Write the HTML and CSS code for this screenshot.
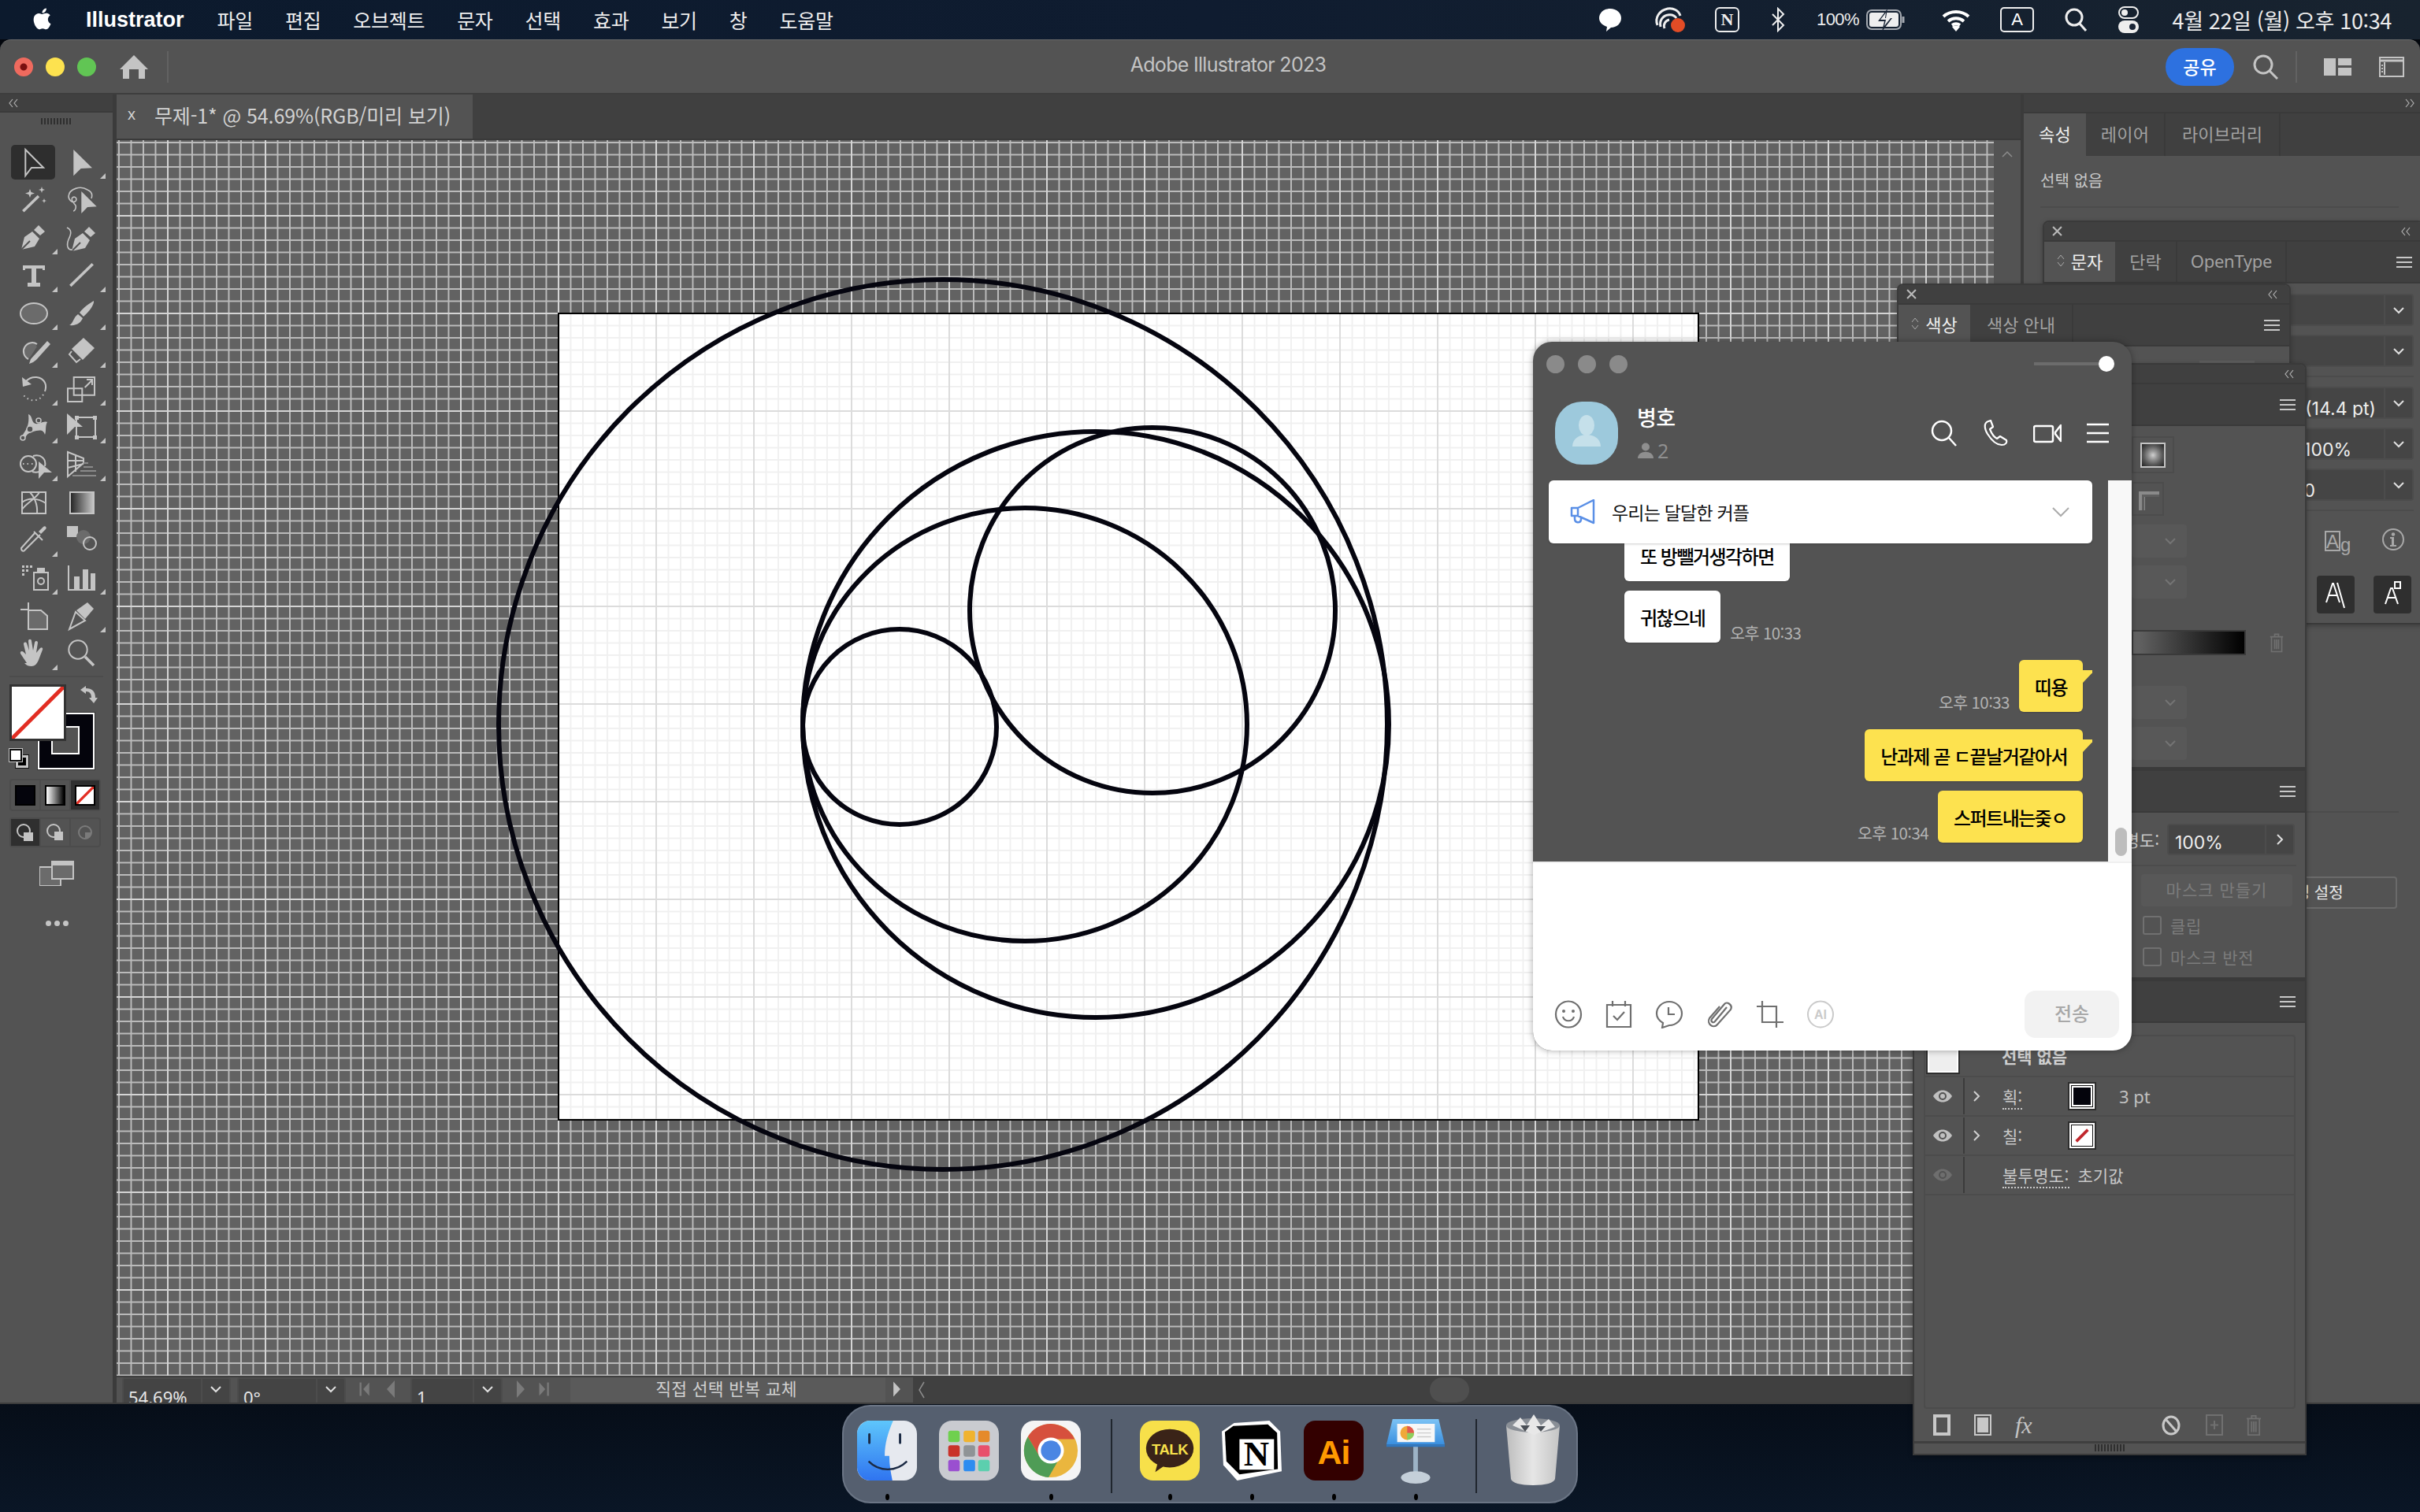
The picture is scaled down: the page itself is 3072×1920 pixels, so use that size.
FILE: index.html
```html
<!DOCTYPE html>
<html lang="ko">
<head>
<meta charset="utf-8">
<title>Adobe Illustrator 2023</title>
<link rel="stylesheet" href="styles.css">
</head>
<body>
<svg class="defs" width="0" height="0">
  <defs>
    <symbol id="chev" viewBox="0 0 16 10"><path d="M2 2l6 6 6-6" fill="none" stroke="currentColor" stroke-width="2"/></symbol>
    <symbol id="chevr" viewBox="0 0 10 16"><path d="M2 2l6 6-6 6" fill="none" stroke="currentColor" stroke-width="2"/></symbol>
    <symbol id="burger" viewBox="0 0 20 16"><path d="M0 2h20M0 8h20M0 14h20" stroke="currentColor" stroke-width="2"/></symbol>
    <symbol id="collapse" viewBox="0 0 14 12"><path d="M6 1L2 6l4 5M12 1L8 6l4 5" fill="none" stroke="currentColor" stroke-width="1.2"/></symbol>
    <symbol id="expand" viewBox="0 0 14 12"><path d="M2 1l4 5-4 5M8 1l4 5-4 5" fill="none" stroke="currentColor" stroke-width="1.2"/></symbol>
    <symbol id="closex" viewBox="0 0 12 12"><path d="M1 1l10 10M11 1L1 11" stroke="currentColor" stroke-width="2"/></symbol>
    <symbol id="updown" viewBox="0 0 10 18"><path d="M1 7l4-5 4 5M1 11l4 5 4-5" fill="none" stroke="currentColor" stroke-width="1"/></symbol>
    <symbol id="eye" viewBox="0 0 26 18"><path d="M1 9c6-10 18-10 24 0-6 10-18 10-24 0z" fill="currentColor"/><circle cx="13" cy="9" r="5" fill="#535353"/><circle cx="13" cy="9" r="3" fill="currentColor"/></symbol>
    <symbol id="trash" viewBox="0 0 22 30"><path d="M1 6h20M8 5V2h6v3M3 6v23h16V6M8 10v15M11 10v15M14 10v15" fill="none" stroke="currentColor" stroke-width="2"/></symbol>
    <linearGradient id="tg" x1="0" x2="1"><stop offset="0" stop-color="#222"/><stop offset="1" stop-color="#c8c8c8"/></linearGradient>
    <linearGradient id="fblue" x1="0" x2="0" y1="0" y2="1"><stop offset="0" stop-color="#5ec6fb"/><stop offset="1" stop-color="#2f74f0"/></linearGradient>
    <linearGradient id="key" x1="0" x2="0" y1="0" y2="1"><stop offset="0" stop-color="#7cc3f5"/><stop offset="1" stop-color="#3a8fdf"/></linearGradient>
    <linearGradient id="trashg" x1="0" x2="1"><stop offset="0" stop-color="#bdbdbd"/><stop offset=".5" stop-color="#e6e6e6"/><stop offset="1" stop-color="#c4c4c4"/></linearGradient>
  </defs>
</svg>

<header class="menubar">
  <div class="mb-left">
    <svg class="apple" viewBox="0 0 24 24"><path d="M17.05 12.536c-.03-2.9 2.37-4.3 2.48-4.37-1.35-1.98-3.45-2.25-4.2-2.28-1.79-.18-3.49 1.05-4.4 1.05-.91 0-2.31-1.03-3.8-1-1.95.03-3.76 1.14-4.76 2.88-2.03 3.52-.52 8.74 1.46 11.6.97 1.4 2.12 2.97 3.63 2.92 1.46-.06 2.01-.94 3.77-.94 1.76 0 2.26.94 3.8.91 1.57-.03 2.56-1.43 3.52-2.84 1.11-1.63 1.57-3.2 1.6-3.28-.04-.02-3.06-1.17-3.1-4.65zM14.15 4c.8-.97 1.34-2.32 1.19-3.66-1.15.05-2.55.77-3.38 1.74-.74.86-1.39 2.23-1.21 3.55 1.28.1 2.59-.65 3.4-1.63z"/></svg>
    <b class="appname">Illustrator</b>
    <span>파일</span><span>편집</span><span>오브젝트</span><span>문자</span><span>선택</span><span>효과</span><span>보기</span><span>창</span><span>도움말</span>
  </div>
  <div class="mb-right">
    <svg class="st-bubble" viewBox="0 0 30 32"><path d="M15 2c8 0 14 5 14 12s-6 12-13 12l-6 5 1-6C5 23 1 19 1 14 1 7 7 2 15 2z" fill="#fff"/></svg>
    <svg class="st-cc" viewBox="0 0 40 34"><path d="M5 24C1 14 8 5 18 3c7-1 14 2 16 9" fill="none" stroke="#eee" stroke-width="3"/><path d="M9 26c-2-8 3-14 9-15 5-1 9 1 11 4M14 28c-2-5 1-10 6-11" fill="none" stroke="#eee" stroke-width="3"/><circle cx="31" cy="24" r="9" fill="#e34c26"/></svg>
    <div class="st-n">N</div>
    <svg class="st-bt" viewBox="0 0 18 32"><path d="M2 9l14 14-7 7V2l7 7L2 23" fill="none" stroke="#eee" stroke-width="2"/></svg>
    <span class="st-pct">100%</span>
    <svg class="st-batt" viewBox="0 0 50 30"><rect x="1" y="3" width="43" height="24" rx="6" fill="none" stroke="#a4a9b0" stroke-width="2"/><rect x="4" y="6" width="37" height="18" rx="3" fill="#eee"/><path d="M47 11v8" stroke="#a4a9b0" stroke-width="3"/><path d="M27 1L15 17h8l-3 13 13-17h-8z" fill="#1a2536"/><path d="M25 6l-7 9h7l-2 8 8-10h-7z" fill="#eee"/></svg>
    <svg class="st-wifi" viewBox="0 0 36 30"><path d="M2 11c9-8 23-8 32 0M8 17c6-5 14-5 20 0M13 22c3-2 7-2 10 0" fill="none" stroke="#fff" stroke-width="4"/><path d="M18 30l-5-6c3-2 7-2 10 0z" fill="#fff"/></svg>
    <div class="st-a">A</div>
    <svg class="st-search" viewBox="0 0 30 32"><circle cx="13" cy="13" r="10" fill="none" stroke="#eee" stroke-width="3"/><path d="M20 21l8 9" stroke="#eee" stroke-width="3"/></svg>
    <svg class="st-ctrl" viewBox="0 0 28 34"><rect x="2" y="1" width="24" height="14" rx="7" fill="none" stroke="#eee" stroke-width="2"/><circle cx="9" cy="8" r="4" fill="#eee"/><rect x="1" y="18" width="26" height="16" rx="8" fill="#eee"/><circle cx="19" cy="26" r="4" fill="#1a2536"/></svg>
    <span class="st-date">4월 22일 (월) 오후 10:34</span>
  </div>
</header>

<main class="app">
  <div class="titlebar">
    <div class="tl-left">
      <i class="light red"></i><i class="light yellow"></i><i class="light green"></i>
      <svg class="home" viewBox="0 0 36 30"><path d="M18 0L36 18h-4v12H24V18H12v12H4V18H0z" fill="#c4c4c4"/></svg>
      <i class="vline"></i>
    </div>
    <div class="apptitle">Adobe Illustrator 2023</div>
    <div class="tl-right">
      <div class="share">공유</div>
      <svg class="tsearch" viewBox="0 0 32 32"><circle cx="13" cy="13" r="11" fill="none" stroke="#c4c4c4" stroke-width="3"/><path d="M21 21l10 10" stroke="#c4c4c4" stroke-width="3"/></svg>
      <i class="vline"></i>
      <svg class="tws" viewBox="0 0 35 22"><path d="M0 0h15v22H0zM18 0h17v9H18zM18 12h17v10H18z" fill="#c4c4c4"/></svg>
      <svg class="tpanel" viewBox="0 0 32 26"><rect x="1" y="1" width="30" height="24" fill="none" stroke="#c4c4c4" stroke-width="2"/><path d="M1 5h30" stroke="#c4c4c4" stroke-width="3"/><path d="M7 7v16" stroke="#c4c4c4" stroke-width="2"/><path d="M4 10v10" stroke="#c4c4c4" stroke-width="2" stroke-dasharray="2 2"/></svg>
    </div>
  </div>

  <div class="workspace">
    <aside class="toolbar">
      <div class="collapse-row"><svg class="mini"><use href="#collapse"/></svg></div>
      <div class="grip"></div>
      <div class="tools">
        <div class="tool sel"><svg viewBox="0 0 40 40"><path class="o" d="M10.3 4v33L18 27l15-.3z"/></svg></div>
        <div class="tool more"><svg viewBox="0 0 40 40"><path class="f" d="M9.3 4v33.3l9.4-9.3 14.3-.7z"/></svg></div>
        <div class="tool"><svg viewBox="0 0 40 40"><path class="o w3" d="M6.3 34.3L26 15"/><path class="f" d="M15 6l1.5 4 4.5 1.500-4.500 1.500L15 17l-1.500-4L9 11.500l4.500-1.500zM30 3l1 3 3 1-3 1-1 3-1-3-3-1 3-1zM33 18l.8 2.200 2.200.800-2.200.8L33 24l-.8-2.200-2.200-.8 2.200-.8z"/></svg></div>
        <div class="tool"><svg viewBox="0 0 40 40"><path class="o t" d="M27 7C18 1 4 6 3 15c0 5 5 9 8 7 4-2 1-8-3-5-3 3 2 7 4 10 1 3-1 7-3 7M27 7c5 2 7 5 5 11"/><path class="f" d="M19.300 9v28l7.700-8 11.700-.7z"/></svg></div>
        <div class="tool more"><svg viewBox="0 0 40 40"><path class="f" d="M4 35L8 19l10-7 9 9-6 10zM20 10l6-6 8 8-6 5z"/><path class="dk" d="M4 35l11-11"/></svg></div>
        <div class="tool"><svg viewBox="0 0 40 40"><path class="f" d="M7 37l4-16 10-7 9 9-6 10zM23 12l6-6 8 8-6 5z"/><path class="dk" d="M7 37l11-11"/><path class="o t" d="M1 7c7 3 5 9 2 15-3 8-1 14 5 13"/></svg></div>
        <div class="tool more"><svg viewBox="0 0 40 40"><path class="f" d="M6 7h28v6h-3v-2H23v18h5v5H12v-5h5V11H9v2H6z"/></svg></div>
        <div class="tool more"><svg viewBox="0 0 40 40"><path class="o w3" d="M5.300 33L33.700 5.300"/></svg></div>
        <div class="tool more"><svg viewBox="0 0 40 40"><ellipse class="o fg" cx="20" cy="20" rx="17" ry="13"/></svg></div>
        <div class="tool more"><svg viewBox="0 0 40 40"><path class="f" d="M35 4c1 4-5 13-13 20l-5-5C22 12 30 7 35 4zM15 21l6 5c-2 5-7 10-17 9 5-2 5-10 11-14z"/></svg></div>
        <div class="tool more"><svg viewBox="0 0 40 40"><path class="o fg" d="M24 11a11 11 0 1 0-11 19"/><path class="fg2" d="M14 14a9 9 0 0 1 10 0l-9 14c-6-3-6-10-1-14z"/><path class="f" d="M37 7l4 4-18 20-4 3-5 2 2-6z"/></svg></div>
        <div class="tool more"><svg viewBox="0 0 40 40"><path class="f" d="M22 3l14 13-15 15-14-14z"/><path class="o" d="M7 20l-3 4 9 10 5-4"/></svg></div>
        <div class="tool more"><svg viewBox="0 0 40 40"><path class="o" d="M10 10c8-8 20-6 24 2 2 4 1 8 0 11"/><path class="f" d="M5 5l1 12 11-3z"/><path class="o dots" d="M32 27c-5 9-17 10-25 1"/></svg></div>
        <div class="tool more"><svg viewBox="0 0 40 40"><path class="o" d="M9.700 5H36v22.700H9.700zM2 19.300h18.300V36H2zM23.700 18l9-9M26 8h7v7"/></svg></div>
        <div class="tool more"><svg viewBox="0 0 40 40"><path class="f" d="M13 4c6 2 3 10 9 12 6 1 9-4 15-2-3 5-1 12-3 16-2-6-5-6-11-5-8 2-11 3-14 9l-4-2c3-6 10-12 8-28z"/><circle class="cut" cx="6" cy="34" r="3"/><circle class="cut" cx="26" cy="12" r="3"/><circle class="cut" cx="15" cy="23" r="4"/></svg></div>
        <div class="tool more"><svg viewBox="0 0 40 40"><path class="o dash" d="M13 8h24v25H13z"/><path class="f" d="M1 3v27l10-10h10z"/><path class="f" d="M11 6h5v5h-5zM34 6h5v5h-5zM11 31h5v5h-5zM34 31h5v5h-5z"/></svg></div>
        <div class="tool more"><svg viewBox="0 0 40 40"><circle class="o" cx="13" cy="19" r="10"/><path class="o" d="M19 9c10-3 17 4 15 13M18 29c3 1 6 1 9 0"/><path class="o dots" d="M6 19h18"/><path class="f" d="M26 16v22l7-8h10z"/></svg></div>
        <div class="tool more"><svg viewBox="0 0 40 40"><path class="o" d="M2 4l20 8v6L2 35zM12 7v22M2 15h20M2 24l20-5"/><path class="o dim" d="M22 18h6M22 23h12M18 28h20M8 34h30"/></svg></div>
        <div class="tool"><svg viewBox="0 0 40 40"><path class="o" d="M5 7h30v27H5zM5 20c8-6 20-6 30 1M5 29c5-8 18-14 22-22M15 7c5 5 10 15 9 27"/></svg></div>
        <div class="tool"><svg viewBox="0 0 40 40"><rect x="5" y="7" width="30" height="27" fill="url(#tg)" stroke="#c4c4c4" stroke-width="2"/></svg></div>
        <div class="tool more"><svg viewBox="0 0 40 40"><path class="o" d="M28 13L9 32c-2 3-5 2-5-2l18-20M20 9l11 11"/><path class="f" d="M26 9l6-6c2-2 5 1 3 3l-6 6z"/></svg></div>
        <div class="tool"><svg viewBox="0 0 40 40"><path class="f" d="M1 2h14v14H1z"/><circle class="fg" cx="22" cy="16" r="9"/><circle class="o" cx="30" cy="24" r="8"/></svg></div>
        <div class="tool more"><svg viewBox="0 0 40 40"><path class="o" d="M20 13h18v22H20z"/><circle class="o" cx="29" cy="24" r="4"/><path class="f" d="M24 7h10v6H24z"/><path class="f" d="M5 4h3v3H5zM10 4h3v3h-3zM15 4h3v3h-3zM5 9h3v3H5zM10 9h3v3h-3zM5 14h3v3H5z"/></svg></div>
        <div class="tool more"><svg viewBox="0 0 40 40"><path class="o" d="M3 4v31h34"/><path class="f" d="M10 18h7v17h-7zM21 9h7v26h-7zM31 14h6v21h-6z"/></svg></div>
        <div class="tool"><svg viewBox="0 0 40 40"><path class="o fg" d="M13 13h16l8 7v17H13z"/><path class="o" d="M3 12h10M13 3v10"/></svg></div>
        <div class="tool more"><svg viewBox="0 0 40 40"><path class="o" d="M4 37l8-22 12 11zM12 15l2 2"/><path class="f" d="M24 24L13 13 27 3l8 8z"/></svg></div>
        <div class="tool more"><svg viewBox="0 0 40 40"><path class="f" d="M11 32L3 20c-1-3 2-4 4-2l3 3-3-13c0-3 3-3 4-1l3 9-1-12c0-3 4-3 4 0l2 12 2-10c1-3 4-2 4 0l-2 13 5-6c2-2 4 0 3 2l-5 13c-2 5-5 8-9 8-4 0-6-1-9-4z"/></svg></div>
        <div class="tool"><svg viewBox="0 0 40 40"><circle class="o" cx="15" cy="15" r="11.700"/><path class="o w3" d="M24 24l11 11"/></svg></div>
      </div>
      <div class="tb-sep"></div>
      <div class="colors">
        <div class="sw-stroke"><i></i></div>
        <div class="sw-fill"><svg viewBox="0 0 66 66"><path d="M0 66L66 0" stroke="#e22d22" stroke-width="5"/></svg></div>
        <svg class="sw-swap" viewBox="0 0 24 24"><path d="M1 6l7-5v3c8 0 12 4 12 12h3l-5 7-6-7h3c0-5-2-8-7-8v3z" fill="#c4c4c4"/></svg>
        <div class="sw-default"><i class="d1"></i><i class="d2"></i></div>
      </div>
      <div class="seg modes">
        <div class="cell"><i class="m-black"></i></div>
        <div class="cell"><i class="m-grad"></i></div>
        <div class="cell on"><i class="m-none"><svg viewBox="0 0 20 20"><path d="M0 20L20 0" stroke="#e22d22" stroke-width="3"/></svg></i></div>
      </div>
      <div class="seg draws">
        <div class="cell on"><svg viewBox="0 0 24 24"><circle class="o" cx="10" cy="10" r="8"/><path class="f" d="M10 12h12v11H10z"/></svg></div>
        <div class="cell"><svg viewBox="0 0 24 24"><circle class="o" cx="10" cy="10" r="8"/><path class="f" d="M11 11h11v11H11z"/></svg></div>
        <div class="cell dimmed"><svg viewBox="0 0 24 24"><circle class="o" cx="12" cy="12" r="8"/><path class="f" d="M12 12h8a8 8 0 0 1-8 8z"/></svg></div>
      </div>
      <svg class="screen" viewBox="0 0 44 32"><path d="M0 8h27v24H0z" fill="#6b6b6b" stroke="#c4c4c4" stroke-width="2"/><path d="M16 1h27v22H16z" fill="#6b6b6b" stroke="#c4c4c4" stroke-width="2"/><path d="M16 1h27v5H16z" fill="#c4c4c4"/></svg>
      <div class="tdots"><i></i><i></i><i></i></div>
    </aside>

    <section class="center">
      <div class="tabbar">
        <div class="doctab"><span class="tabx">x</span><span>무제-1* @ 54.69%(RGB/미리 보기)</span></div>
      </div>
      <div class="canvas-row">
        <div class="canvas">
          <div class="artboard"></div>
          <svg class="shapes" viewBox="0 0 2383 1569">
            <ellipse cx="1049" cy="742" rx="564" ry="565"/>
            <ellipse cx="1243" cy="742" rx="372" ry="372"/>
            <ellipse cx="1153" cy="742" rx="282" ry="275"/>
            <ellipse cx="1315" cy="597" rx="232" ry="232"/>
            <ellipse cx="994" cy="745" rx="123" ry="124"/>
          </svg>
        </div>
        <div class="vscroll"><svg class="upc" viewBox="0 0 16 10"><path d="M2 8l6-6 6 6" fill="none" stroke="#8c8c8c" stroke-width="1.500"/></svg></div>
      </div>
      <div class="statusbar">
        <div class="sfield zoomf"><span>54.69%</span><div class="sbtn"><svg class="chev"><use href="#chev"/></svg></div></div>
        <div class="sfield rotf"><span>0°</span><div class="sbtn"><svg class="chev"><use href="#chev"/></svg></div></div>
        <div class="snav"><svg viewBox="0 0 34 30" class="nav"><path d="M2 4h3v22H2zM18 4L8 15l10 11z"/></svg><svg viewBox="0 0 16 30" class="nav n2"><path d="M12 4L2 15l10 11z"/></svg></div>
        <div class="sfield pagef"><span>1</span><div class="sbtn"><svg class="chev"><use href="#chev"/></svg></div></div>
        <div class="snav"><svg viewBox="0 0 16 30" class="nav"><path d="M2 4l10 11L2 26z"/></svg><svg viewBox="0 0 34 30" class="nav n3"><path d="M2 4l10 11L2 26zM15 4h3v22h-3z"/></svg></div>
        <div class="stext">직접 선택 반복 교체</div>
        <svg class="splay" viewBox="0 0 14 30"><path d="M1 2l12 13L1 28z" fill="#c4c4c4"/></svg>
        <div class="strack">
          <svg class="sleft" viewBox="0 0 10 24"><path d="M8 2L2 12l6 10" fill="none" stroke="#8c8c8c" stroke-width="1.500"/></svg>
          <i class="sthumb"></i>
        </div>
      </div>
    </section>

    <aside class="rightpanel">
      <div class="rp-collapse"><svg class="mini"><use href="#expand"/></svg></div>
      <div class="tabs rp-tabs">
        <div class="tab on">속성</div><div class="tab">레이어</div><div class="tab">라이브러리</div><div class="tab-fill"></div>
      </div>
      <div class="rp-none">선택 없음</div>
      <div class="rp-line"></div>
      <div class="rp-line lower"></div>
      <div class="rp-btn"><span>환경 설정</span></div>
    </aside>
  </div>
</main>

<section class="floatpanel charpanel">
  <div class="fp-title"><svg class="xmark"><use href="#closex"/></svg><svg class="mini"><use href="#collapse"/></svg></div>
  <div class="tabs fp-tabs">
    <div class="tab on"><svg class="ud"><use href="#updown"/></svg>문자</div><div class="tab">단락</div><div class="tab">OpenType</div>
    <div class="tab-fill"><svg class="burger"><use href="#burger"/></svg></div>
  </div>
  <div class="cp-body">
    <div class="field"><div class="ftxt"></div><div class="fbtn"><svg class="chev"><use href="#chev"/></svg></div></div>
    <div class="field"><div class="ftxt"></div><div class="fbtn"><svg class="chev"><use href="#chev"/></svg></div></div>
    <div class="hsep"></div>
    <div class="field"><div class="ftxt">(14.4 pt)</div><div class="fbtn"><svg class="chev"><use href="#chev"/></svg></div></div>
    <div class="field"><div class="ftxt">100%</div><div class="fbtn"><svg class="chev"><use href="#chev"/></svg></div></div>
    <div class="field"><div class="ftxt">0</div><div class="fbtn"><svg class="chev"><use href="#chev"/></svg></div></div>
    <div class="hsep"></div>
    <div class="cp-icons">
      <div class="ag"><span class="ag-a">A</span><span class="ag-g">g</span></div>
      <svg class="info" viewBox="0 0 30 30"><circle cx="15" cy="15" r="13" fill="none" stroke="#a8a8a8" stroke-width="2"/><circle cx="15" cy="8.500" r="2.200" fill="#a8a8a8"/><path d="M11 12h5v10h3v2h-8v-2h2v-8h-2z" fill="#a8a8a8"/></svg>
    </div>
    <div class="cp-btns">
      <div class="darkbtn"><svg viewBox="0 0 30 36"><path d="M3 28L11 4h1l8 24M6 19h11M17 3l9 32" fill="none" stroke="#fff" stroke-width="2"/></svg></div>
      <div class="darkbtn"><svg viewBox="0 0 30 36"><path d="M6 30l7-20h2l7 20M8 22h12" fill="none" stroke="#fff" stroke-width="2"/><path d="M18 2h7v8h-7z" fill="none" stroke="#fff" stroke-width="2"/></svg></div>
    </div>
  </div>
</section>

<section class="floatpanel colorpanel">
  <div class="fp-title"><svg class="xmark"><use href="#closex"/></svg><svg class="mini"><use href="#collapse"/></svg></div>
  <div class="tabs fp-tabs">
    <div class="tab on"><svg class="ud"><use href="#updown"/></svg>색상</div><div class="tab">색상 안내</div>
    <div class="tab-fill"><svg class="burger"><use href="#burger"/></svg></div>
  </div>
  <div class="col-body"><i></i></div>
</section>

<section class="stack">
  <div class="sp grad">
    <div class="fp-title right"><svg class="mini"><use href="#collapse"/></svg></div>
    <div class="sp-head"><svg class="burger"><use href="#burger"/></svg></div>
    <div class="g-body">
      <div class="g-thumbbox"><i></i></div>
      <div class="g-thumbbox two"><svg viewBox="0 0 28 28"><path d="M2 4h26v6H10v18H2z" fill="#8a8a8a"/><path d="M6 8h22v3H9v17H6z" fill="#5f5f5f"/></svg></div>
      <div class="g-drop"><svg class="chev"><use href="#chev"/></svg></div>
      <div class="g-drop"><svg class="chev"><use href="#chev"/></svg></div>
      <div class="g-bar"><i></i><svg class="g-trash"><use href="#trash"/></svg></div>
      <div class="g-drop"><svg class="chev"><use href="#chev"/></svg></div>
      <div class="g-drop"><svg class="chev"><use href="#chev"/></svg></div>
    </div>
  </div>
  <div class="sp trans">
    <div class="sp-head"><svg class="burger"><use href="#burger"/></svg></div>
    <div class="t-row">
      <span class="t-label">불투명도:</span>
      <div class="t-input"><span>100%</span><div class="t-btn"><svg class="chevr"><use href="#chevr"/></svg></div></div>
    </div>
    <div class="t-sep"></div>
    <div class="t-mask">마스크 만들기</div>
    <label class="t-check"><i></i>클립</label>
    <label class="t-check"><i></i>마스크 반전</label>
  </div>
  <div class="sp appear">
    <div class="sp-head"><svg class="burger"><use href="#burger"/></svg></div>
    <div class="a-list">
      <div class="a-row top"><i class="a-thumb"></i><span class="a-none">선택 없음</span></div>
      <div class="a-row"><svg class="eye"><use href="#eye"/></svg><i class="a-v"></i><svg class="a-ch"><use href="#chevr"/></svg><span class="a-lab u-wrap"><span class="u">획:</span></span><div class="a-sw"><i class="in-black"></i></div><span class="a-val">3 pt</span></div>
      <div class="a-row"><svg class="eye"><use href="#eye"/></svg><i class="a-v"></i><svg class="a-ch"><use href="#chevr"/></svg><span class="a-lab">칠:</span><div class="a-sw"><i class="in-none"><svg viewBox="0 0 24 24"><path d="M4 20L20 4" stroke="#c1272d" stroke-width="4"/></svg></i></div></div>
      <div class="a-row"><svg class="eye off"><use href="#eye"/></svg><i class="a-v"></i><span class="a-lab wide"><span class="u gap">불투명도:</span> 초기값</span></div>
    </div>
    <div class="a-foot">
      <svg class="af" viewBox="0 0 22 27"><path d="M2 2h18v23H2z" fill="none" stroke="#c8c8c8" stroke-width="4"/></svg>
      <svg class="af" viewBox="0 0 22 27"><path d="M1 1h20v25H1z" fill="none" stroke="#c8c8c8" stroke-width="2"/><path d="M4 4h14v19H4z" fill="#c8c8c8"/></svg>
      <span class="fx">fx</span>
      <svg class="af noic" viewBox="0 0 24 26"><ellipse cx="12" cy="13" rx="10" ry="11" fill="none" stroke="#c8c8c8" stroke-width="3"/><path d="M5 5l14 16" stroke="#c8c8c8" stroke-width="3"/></svg>
      <svg class="af plus" viewBox="0 0 22 27"><path d="M1 1h20v25H1zM11 8v11M6 13.500h10" fill="none" stroke="#707070" stroke-width="2"/></svg>
      <svg class="af atrash"><use href="#trash"/></svg>
    </div>
    <div class="a-grip"><i></i></div>
  </div>
</section>

<section class="chat">
  <div class="ch-top">
    <div class="ch-dots"><i></i><i></i><i></i></div>
    <div class="ch-slider"><i></i></div>
  </div>
  <div class="ch-profile">
    <div class="avatar"><svg viewBox="0 0 80 80"><ellipse cx="40" cy="30" rx="10" ry="13" fill="#c5e0ea"/><path d="M22 57c0-20 36-20 36 0z" fill="#c5e0ea"/></svg></div>
    <div class="ch-who">
      <div class="ch-name">병호</div>
      <div class="ch-count"><svg viewBox="0 0 22 20"><circle cx="11" cy="5.500" r="5" fill="#8f8f8f"/><path d="M1 20c0-11 20-11 20 0z" fill="#8f8f8f"/></svg>2</div>
    </div>
    <div class="ch-actions">
      <svg viewBox="0 0 34 34"><circle cx="14" cy="14" r="12" fill="none" stroke="#fff" stroke-width="2.500"/><path d="M23 23l9 10" stroke="#fff" stroke-width="2.500"/></svg>
      <svg viewBox="0 0 34 34"><path d="M8 2c-6 2-5 9-1 16 5 8 12 14 18 14 5 0 7-3 6-6l-8-5-4 3c-4-2-7-7-9-12l4-3-3-8z" fill="none" stroke="#fff" stroke-width="2.200" stroke-linejoin="round"/></svg>
      <svg viewBox="0 0 36 34"><rect x="1" y="8" width="24" height="20" rx="2" fill="none" stroke="#fff" stroke-width="2.500"/><path d="M35 7L28 16v2l7 9z" fill="none" stroke="#fff" stroke-width="2.500" stroke-linejoin="round"/></svg>
      <svg viewBox="0 0 30 34"><path d="M1 6h28M1 17h28M1 28h28" stroke="#fff" stroke-width="2.500"/></svg>
    </div>
  </div>
  <div class="ch-area">
    <div class="ch-msgs">
      <div class="msg left"><div class="bubble white">또 방뺄거생각하면</div></div>
      <div class="msg left"><div class="bubble white">귀찮으네</div><time>오후 10:33</time></div>
      <div class="msg right wide"><time>오후 10:33</time><div class="bubble yellow tail">띠용</div></div>
      <div class="msg right wide"><div class="bubble yellow tail">난과제 곧 ㄷ끝날거같아서</div></div>
      <div class="msg right"><time>오후 10:34</time><div class="bubble yellow">스퍼트내는줒ㅇ</div></div>
    </div>
    <div class="ch-strip"><i></i></div>
    <div class="notice">
      <svg class="mega" viewBox="0 0 32 32"><path d="M2 11h8L30 1v29L10 21H2zM10 11v10M6 21v4c0 5 7 6 8 1v-3" fill="none" stroke="#5a8fe6" stroke-width="2.500" stroke-linejoin="round"/></svg>
      <span>우리는 달달한 커플</span>
      <svg class="nchev" viewBox="0 0 24 14"><path d="M2 2l10 10L22 2" fill="none" stroke="#ababab" stroke-width="2"/></svg>
    </div>
  </div>
  <div class="ch-input">
    <div class="ci-tools">
      <svg viewBox="0 0 36 36"><ellipse cx="18" cy="18" rx="16" ry="16.500" class="ci"/><circle cx="12" cy="14" r="2" class="cf"/><circle cx="24" cy="14" r="2" class="cf"/><path d="M11 21c2 7 12 7 14 0" class="ci"/></svg>
      <svg viewBox="0 0 36 36"><path d="M3 6h30v28H3zM10 1v7M26 1v7M11 20l5 5 9-10" class="ci"/></svg>
      <svg viewBox="0 0 36 36"><path d="M18 2c9 0 16 7 16 15s-7 15-16 15l-9 3 1-6C5 26 2 22 2 17 2 9 9 2 18 2z" class="ci"/><path d="M17 9v9h8" class="ci"/></svg>
      <svg viewBox="0 0 36 36"><path d="M27 9L12 27c-2 3-6 0-4-3L24 5c3-4 11 1 8 7L15 31c-5 6-14-1-10-8L18 8" class="ci"/></svg>
      <svg viewBox="0 0 36 36"><path d="M8 1v27h27M1 8h25v27" class="ci"/></svg>
      <svg viewBox="0 0 36 36" class="ci-ai"><ellipse cx="18" cy="18" rx="16" ry="16.500" class="ca"/><text x="18" y="24" text-anchor="middle">AI</text></svg>
    </div>
    <div class="send">전송</div>
  </div>
</section>

<nav class="dock">
  <div class="d-item">
    <svg class="d-ic" viewBox="0 0 78 78"><rect width="78" height="78" rx="17" fill="#e6e9ef"/><path d="M17 0h30c-7 16-11 30-11 46h6c0 12 2 22 4 32H17C8 78 0 70 0 61V17C0 8 8 0 17 0z" fill="url(#fblue)"/><path d="M16 18v11M56 18v11" stroke="#1b2a44" stroke-width="3" stroke-linecap="round"/><path d="M15 53c14 14 36 14 50 0" fill="none" stroke="#1b2a44" stroke-width="2.500"/></svg>
    <i class="dot"></i>
  </div>
  <div class="d-item">
    <svg class="d-ic" viewBox="0 0 78 78"><rect width="78" height="78" rx="17" fill="#c9cbd0"/><rect x="12" y="13" width="15" height="15" rx="3" fill="#6fd04e"/><rect x="32" y="13" width="15" height="15" rx="3" fill="#f0b32f"/><rect x="51" y="13" width="15" height="15" rx="3" fill="#e58a2b"/><rect x="12" y="32" width="15" height="15" rx="3" fill="#c9322a"/><rect x="32" y="32" width="15" height="15" rx="3" fill="#8f9396"/><rect x="51" y="32" width="15" height="15" rx="3" fill="#e8506c"/><rect x="12" y="51" width="15" height="15" rx="3" fill="#9a4fd0"/><rect x="32" y="51" width="15" height="15" rx="3" fill="#2d8cf0"/><rect x="51" y="51" width="15" height="15" rx="3" fill="#5ccfae"/></svg>
  </div>
  <div class="d-item">
    <svg class="d-ic" viewBox="0 0 78 78"><rect width="78" height="78" rx="17" fill="#f5f5f5"/><circle cx="39" cy="39" r="35" fill="#eab63e"/><path d="M39 4a35 35 0 0 0-30 17l16 27 14-24h31A35 35 0 0 0 39 4z" fill="#d6503d"/><path d="M9 21a35 35 0 0 0 27 53l13-23-24-3z" fill="#4f9c56"/><circle cx="39" cy="39" r="17" fill="#fff"/><circle cx="39" cy="39" r="13" fill="#4a86e3"/></svg>
    <i class="dot"></i>
  </div>
  <i class="d-div"></i>
  <div class="d-item">
    <svg class="d-ic" viewBox="0 0 78 78"><rect width="78" height="78" rx="17" fill="#f7e04a"/><ellipse cx="39" cy="36" rx="31" ry="25" fill="#3a2318"/><path d="M24 52l-4 15 16-11z" fill="#3a2318"/><text x="39" y="44" class="talk" text-anchor="middle">TALK</text></svg>
    <i class="dot"></i>
  </div>
  <div class="d-item">
    <svg class="d-ic" viewBox="0 0 78 78"><path d="M16 3L62 0l14 14 2 52-58 12L2 58 0 14z" fill="#fff"/><path d="M15 7L60 5l12 11 1 47-50 7L6 53 4 15z" fill="#000"/><path d="M23 24h45v40H23z" fill="#fff"/><text x="45" y="58" class="notion" text-anchor="middle">N</text></svg>
    <i class="dot"></i>
  </div>
  <div class="d-item">
    <svg class="d-ic" viewBox="0 0 78 78"><rect width="78" height="78" rx="15" fill="#330000"/><text x="39" y="56" class="aitext" text-anchor="middle">Ai</text></svg>
    <i class="dot"></i>
  </div>
  <div class="d-item keynote">
    <svg class="d-ic" viewBox="0 0 78 86"><path d="M36 34h6v40h-6z" fill="#9db3c6"/><ellipse cx="39" cy="76" rx="19" ry="8" fill="#c4cfd9"/><path d="M9 0h60l8 33H1z" fill="url(#key)"/><path d="M1 33h76v3H1z" fill="#3077c0"/><path d="M15 6h49v24H15z" fill="#f7f7f7"/><circle cx="28" cy="18" r="9" fill="#f0a83a"/><path d="M28 9a9 9 0 0 1 9 9h-9z" fill="#e2584e"/><path d="M28 18h9a9 9 0 0 1-9 9z" fill="#8dcf5e"/><path d="M41 13h18M41 18h18M41 23h18" stroke="#ccc" stroke-width="1.500"/></svg>
    <i class="dot"></i>
  </div>
  <i class="d-div"></i>
  <div class="d-item d-trash">
    <svg class="d-ic" viewBox="0 0 72 90"><path d="M2 14l6 68c1 5 12 8 28 8s27-3 28-8l6-68z" fill="url(#trashg)"/><ellipse cx="36" cy="14" rx="34" ry="9" fill="#8a8f96"/><path d="M10 14l10-10 8 10 9-14 9 14 10-8 8 10-27 10z" fill="#e8e8e8"/><path d="M20 14l6 8 6-8zM40 15l6 7 6-7z" fill="#4a4f56"/></svg>
  </div>
</nav>
</body>
</html>
```
FILE: styles.css
```css
* { box-sizing: border-box; }
html, body { margin: 0; padding: 0; }
body {
  width: 3072px; height: 1920px; position: relative; overflow: hidden;
  background: linear-gradient(180deg, #03060c 0, #04080f 88%, #0a1626 100%);
  font-family: "Noto Sans CJK KR", "Noto Sans", sans-serif;
  color: #c4c4c4; font-size: 22px;
}
i { display: block; font-style: normal; }
svg { display: block; }
.defs { position: absolute; }

/* menu bar */
.menubar {
  height: 50px; display: flex; align-items: center; justify-content: space-between;
  background: linear-gradient(90deg, #0c1a2d, #0f1c30 50%, #18232f);
  color: #eee; padding-left: 41px; padding-right: 36px;
}
.mb-left { display: flex; align-items: center; gap: 41px; font-size: 25px; letter-spacing: -.3px; }
.apple { width: 28px; height: 34px; fill: #fff; margin-top: -3px; margin-right: -1px; }
.appname { font-family: "Liberation Sans", sans-serif; font-size: 27px; font-weight: 700; letter-spacing: 0; color: #fff; margin-right: 1px; }
.mb-right { display: flex; align-items: center; gap: 38px; }
.st-bubble { width: 30px; height: 32px; margin-right: 2px; }
.st-cc { width: 40px; height: 34px; }
.st-n { width: 31px; height: 32px; border: 2px solid #eee; border-radius: 6px; text-align: center; font: 700 22px/28px "Liberation Serif", serif; color: #eee; margin-right: 2px; }
.st-bt { width: 18px; height: 32px; margin-right: 2px; }
.st-pct { width: 58px; font-family: "Liberation Sans", sans-serif; font-size: 22px; letter-spacing: -.6px; margin-right: -33px; white-space: nowrap; }
.st-batt { width: 50px; height: 30px; }
.st-wifi { width: 36px; height: 30px; margin-left: 8px; }
.st-a { width: 43px; height: 32px; border: 2px solid #eee; border-radius: 5px; text-align: center; font: 22px/28px "Liberation Sans", sans-serif; color: #fff; }
.st-search { width: 30px; height: 32px; }
.st-ctrl { width: 28px; height: 34px; }
.st-date { width: 282px; white-space: nowrap; font-size: 27px; letter-spacing: -.35px; text-align: right; }

/* app window */
.app { height: 1733px; background: #535353; border-radius: 14px 14px 0 0; display: flex; flex-direction: column; overflow: hidden; border-top: 1px solid #6a6a6a; border-bottom: 2px solid #3c3c3c; }
.titlebar { height: 69px; flex: none; display: flex; align-items: center; justify-content: space-between; position: relative; border-bottom: 2px solid #3d3d3d; }
.tl-left { display: flex; align-items: center; padding-left: 18px; }
.light { width: 24px; height: 24px; border-radius: 50%; margin-right: 16px; }
.red { background: radial-gradient(circle, #7a1010 0 4px, #ef6a5e 5px); }
.yellow { background: #f5be4f; }
.green { background: #61c554; }
.home { width: 36px; height: 30px; margin-left: 14px; margin-right: 24px; }
.vline { width: 2px; height: 40px; background: #626262; }
.apptitle { position: absolute; left: 0; right: 0; padding-left: 46px; margin-top: -5px; text-align: center; font-family: "Inter", sans-serif; font-size: 25px; color: #c4c4c4; letter-spacing: -.7px; }
.tl-right { display: flex; align-items: center; padding-right: 20px; }
.share { width: 87px; height: 48px; border-radius: 24px; background: #2d71e0; color: #fff; font-size: 23px; font-weight: 500; text-align: center; line-height: 46px; margin-right: 24px; }
.tsearch { width: 32px; height: 32px; margin-right: 22px; }
.tws { width: 35px; height: 22px; margin: 0 35px 0 34px; }
.tpanel { width: 32px; height: 26px; }

.workspace { flex: 1; display: flex; min-height: 0; background: #3b3b3b; }

/* toolbar */
.toolbar { width: 143px; margin-right: 5px; background: #535353; flex: none; }
.collapse-row { height: 23px; background: #404040; display: flex; align-items: center; padding-left: 10px; border-bottom: 2px solid #3a3a3a; color: #aaa; }
.mini { width: 14px; height: 12px; color: #b0b0b0; }
.grip { height: 8px; width: 38px; margin: 7px 0 10px 52px; background: repeating-linear-gradient(90deg, #2f2f2f 0 2px, transparent 2px 4px); }
.tools { display: grid; grid-template-columns: 61px 61px; grid-auto-rows: 48px; padding-left: 12px; margin-top: 24px; }
.tool { position: relative; display: flex; align-items: center; justify-content: center; }
.tool svg { width: 40px; height: 40px; overflow: visible; }
.tool.sel { background: #2e2e2e; border-radius: 5px; width: 56px; height: 44px; margin: 2px 0 0 2px; }
.tool.more::after { content: ""; position: absolute; right: 0; bottom: 3px; width: 0; height: 0; border-left: 7px solid transparent; border-bottom: 7px solid #c4c4c4; }
.o { fill: none; stroke: #c4c4c4; stroke-width: 2; }
.t { stroke-width: 1.600; }
.w3 { stroke-width: 3.500; }
.fg { fill: #6b6b6b; }
.fg2 { fill: #6b6b6b; }
.f { fill: #c4c4c4; }
.dk { stroke: #535353; stroke-width: 2; fill: none; }
.cut { fill: #535353; stroke: #c4c4c4; stroke-width: 1.500; }
.dots { stroke-dasharray: 1.500 4; }
.dash { stroke-dasharray: 4 0; }
.dim { stroke: #8a8a8a; }
.tb-sep { height: 2px; background: #4c4c4c; margin: 4px 12px 9px; }
.colors { position: relative; height: 120px; }
.sw-fill { position: absolute; left: 12px; top: 0; width: 72px; height: 72px; background: #fff; border: 3px solid #333; z-index: 1; }
.sw-stroke { position: absolute; left: 48px; top: 36px; width: 72px; height: 72px; background: #04040c; border: 2px solid #fff; outline: 1px solid #333; display: flex; align-items: center; justify-content: center; }
.sw-stroke i { width: 36px; height: 36px; background: #535353; border: 2px solid #fff; margin: -3px 0 0 -3px; }
.sw-swap { position: absolute; left: 101px; top: 1px; width: 24px; height: 24px; }
.sw-default { position: absolute; left: 12px; top: 82px; width: 24px; height: 24px; }
.d1, .d2 { position: absolute; width: 16px; height: 16px; }
.d2 { left: 8px; top: 8px; background: #000; border: 3px solid #c4c4c4; outline: 1px solid #111; }
.d1 { left: 0; top: 0; background: #fff; border: 2px solid #111; outline: 1px solid #c4c4c4; z-index: 1; }
.seg { display: flex; height: 41px; margin: 0 15px 0 12px; border: 2px solid #4c4c4c; border-radius: 4px; }
.seg .cell { flex: 1; display: flex; align-items: center; justify-content: center; border-right: 2px solid #4c4c4c; }
.seg .cell:last-child { border-right: 0; }
.seg .cell.on { background: #2f2f2f; }
.m-black, .m-grad, .m-none { width: 26px; height: 26px; border: 2px solid #000; }
.m-black { background: #04040c; }
.m-grad { background: linear-gradient(90deg, #fff, #000); }
.m-none { background: #fff; }
.draws { margin-top: 8px; height: 38px; }
.draws svg { width: 24px; height: 24px; }
.dimmed { opacity: .35; }
.screen { width: 44px; height: 32px; margin: 17px 0 0 50px; }
.tdots { display: flex; gap: 4px; margin: 44px 0 0 58px; }
.tdots i { width: 7px; height: 7px; border-radius: 50%; background: #c4c4c4; }

/* centre */
.center { flex: 1; min-width: 0; display: flex; flex-direction: column; }
.tabbar { height: 58px; flex: none; background: #404040; border-bottom: 2px solid #3a3a3a; }
.doctab { width: 452px; height: 56px; background: #535353; display: flex; align-items: center; padding: 0 0 5px 14px; gap: 24px; color: #d2d2d2; font-size: 25px; letter-spacing: -.1px; white-space: nowrap; }
.tabx { font-family: "Liberation Sans", sans-serif; font-size: 20px; }
.canvas-row { flex: 1; display: flex; min-height: 0; }
.canvas {
  flex: 1; position: relative;
  background-color: #626262;
  background-image:
    linear-gradient(90deg, #d4d4d4 2px, transparent 2px),
    linear-gradient(180deg, #d4d4d4 2px, transparent 2px),
    linear-gradient(90deg, #bcbcbc 2px, transparent 2px),
    linear-gradient(180deg, #bcbcbc 2px, transparent 2px);
  background-size: 124px 124px, 124px 124px, 15.500px 15.500px, 15.500px 15.500px;
  background-position: 64px 0, 0 95px, 64px 0, 0 95px;
}
.artboard {
  position: absolute; left: 560px; top: 219px; width: 1449px; height: 1026px;
  background-color: #fff; border: 2px solid #000;
  background-image:
    linear-gradient(90deg, #dcdcdc 2px, transparent 2px),
    linear-gradient(180deg, #dcdcdc 2px, transparent 2px),
    linear-gradient(90deg, #f0f0f0 2px, transparent 2px),
    linear-gradient(180deg, #f0f0f0 2px, transparent 2px);
  background-size: 124px 124px, 124px 124px, 15.500px 15.500px, 15.500px 15.500px;
  background-position: -2px 0, 0 -2px, -2px 0, 0 -2px;
}
.shapes { position: absolute; left: 0; top: 0; width: 100%; height: 100%; overflow: visible; }
.shapes ellipse { fill: none; stroke: #05050f; stroke-width: 6; }
.vscroll { width: 34px; flex: none; background: #535353; }
.upc { width: 16px; height: 10px; margin: 13px 0 0 9px; }
.statusbar { height: 34px; flex: none; display: flex; align-items: flex-start; background: #535353; border-top: 2px solid #3f3f3f; padding-left: 7px; overflow: hidden; color: #e0e0e0; }
.sfield { height: 40px; background: #444; border: 2px solid #4c4c4c; border-radius: 4px; display: flex; position: relative; }
.sfield span { flex: 1; padding: 8px 0 0 6px; font-size: 22px; color: #e6e6e6; font-family: "Noto Sans", sans-serif; line-height: 30px; white-space: nowrap; }
.sbtn { width: 36px; border-left: 2px solid #4c4c4c; display: flex; justify-content: center; padding-top: 8px; }
.chev { width: 16px; height: 10px; color: #e0e0e0; }
.zoomf { width: 138px; margin-right: 8px; }
.rotf { width: 138px; }
.pagef { width: 117px; }
.snav { width: 82px; display: flex; align-items: center; height: 30px; justify-content: center; gap: 8px; }
.nav { height: 30px; width: 26px; fill: #7a7a7a; }
.nav.n2 { width: 16px; }
.nav.n3 { width: 26px; }
.stext { width: 400px; height: 32px; margin-left: 4px; background: #5a5a5a; text-align: center; font-size: 21.500px; line-height: 28px; color: #d0d0d0; letter-spacing: .3px; padding-right: 4px; }
.splay { width: 11px; height: 22px; margin: 4px 15px 0 9px; }
.strack { flex: 1; height: 32px; background: #404040; display: flex; align-items: center; position: relative; }
.sleft { width: 10px; height: 24px; margin-left: 6px; }
.sthumb { width: 50px; height: 32px; border-radius: 16px; background: #4f4f4f; margin-left: 640px; }

/* right panel */
.rightpanel { width: 503px; margin-left: 4px; flex: none; background: #535353; display: flex; flex-direction: column; }
.rp-collapse { height: 24px; background: #404040; display: flex; align-items: center; justify-content: flex-end; padding-right: 6px; border-bottom: 2px solid #3a3a3a; }
.tabs { display: flex; align-items: stretch; font-size: 22px; white-space: nowrap; background: #404040; color: #a2a2a2; }
.rp-tabs { height: 54px; }
.tab { display: flex; align-items: center; justify-content: center; padding: 0 18px 3px; border-right: 2px solid #3a3a3a; }
.tab.on { background: #535353; color: #eee; border-right: 0; }
.rp-tabs .tab { letter-spacing: .2px; }
.rp-tabs .tab.on { width: 79px; padding: 0 0 5px; }
.rp-tabs .tab:nth-child(2) { width: 101px; padding: 0 0 5px; }
.rp-tabs .tab:nth-child(3) { width: 146px; padding: 0 0 5px; }
.tab-fill { flex: 1; display: flex; align-items: center; justify-content: flex-end; padding-right: 10px; }
.rp-none { padding: 16px 0 0 21px; font-size: 20px; color: #c8c8c8; line-height: 30px; }
.rp-line { height: 2px; background: #4c4c4c; margin: 18px 27px 0 21px; }
.rp-line.lower { margin-top: 766px; }
.rp-btn { width: 216px; height: 41px; margin: 81px 0 0 258px; border: 2px solid #6a6a6a; border-radius: 4px; text-align: center; font-size: 20px; line-height: 36px; color: #e8e8e8; }

/* floating panels */
.floatpanel { position: absolute; background: #535353; border: 2px solid #3a3a3a; border-radius: 8px 8px 0 0; overflow: hidden; box-shadow: 0 2px 6px rgba(0,0,0,.25); }
.fp-title { height: 25px; background: #404040; display: flex; align-items: center; justify-content: space-between; padding: 0 9px 0 10px; border-bottom: 2px solid #3a3a3a; }
.fp-title.right { justify-content: flex-end; padding-right: 13px; }
.xmark { width: 13px; height: 13px; color: #b8b8b8; }
.fp-tabs { height: 53px; border-bottom: 2px solid #3a3a3a; }
.fp-tabs .tab { font-size: 22px; }
.ud { width: 10px; height: 18px; margin-right: 8px; color: #aaa; flex: none; }
.burger { width: 20px; height: 16px; color: #c8c8c8; }
.charpanel { left: 2593px; top: 280px; width: 484px; height: 513px; }
.charpanel .tab.on { width: 90px; padding: 0 0 3px; }
.charpanel .tab:nth-child(2) { width: 79px; padding: 0 0 3px; }
.charpanel .tab:nth-child(3) { width: 139px; padding: 0 0 3px; letter-spacing: -.3px; font-family: "Noto Sans", sans-serif; }
.charpanel .tab-fill { padding-right: 13px; }
.charpanel .fp-title { padding-right: 14px; }
.cp-body { padding: 13px 0 0 16px; }
.field { width: 453px; height: 41px; margin-bottom: 11px; border: 2px solid #4c4c4c; border-radius: 4px; background: #454545; display: flex; }
.ftxt { flex: 1; text-align: right; font-family: "Inter", "Noto Sans", sans-serif; font-size: 23px; line-height: 52px; color: #eee; overflow: hidden; white-space: nowrap; }
.field:nth-child(4) .ftxt { padding-right: 10px; }
.field:nth-child(5) .ftxt { padding-right: 41px; }
.field:nth-child(6) .ftxt { padding-right: 87px; }
.fbtn { width: 36px; border-left: 2px solid #4c4c4c; display: flex; justify-content: center; align-items: center; }
.hsep { height: 2px; background: #4c4c4c; width: 453px; margin: 0 0 12px; }
.cp-icons { display: flex; justify-content: flex-end; gap: 40px; padding-right: 22px; margin-top: 21px; align-items: center; height: 30px; }
.ag { display: flex; align-items: flex-end; width: 32px; height: 30px; color: #a8a8a8; }
.ag-a { width: 20px; height: 26px; border: 2px solid #a8a8a8; font: 24px/24px "Liberation Sans", sans-serif; text-align: center; }
.ag-g { font: 24px/24px "Liberation Sans", sans-serif; margin-bottom: -4px; }
.info { width: 30px; height: 30px; }
.cp-btns { display: flex; justify-content: flex-end; gap: 24px; padding-right: 14px; margin-top: 31px; }
.darkbtn { width: 48px; height: 48px; border-radius: 4px; background: #2f2f2f; display: flex; align-items: center; justify-content: center; }
.darkbtn svg { width: 30px; height: 36px; }

.colorpanel { left: 2408px; top: 360px; width: 500px; height: 130px; }
.colorpanel .tab.on { width: 91px; padding: 0 0 3px; }
.colorpanel .tab:nth-child(2) { width: 131px; padding: 0 0 3px; }
.colorpanel .fp-title { padding-right: 14px; }
.colorpanel .tab-fill { padding-right: 12px; }
.col-body i { width: 70px; height: 4px; margin-left: 382px; margin-top: 18px; background: #5d5d5d; }

.stack { position: absolute; left: 2428px; top: 461px; width: 500px; height: 1387px; background: #3a3a3a; border: 2px solid #3a3a3a; border-radius: 8px 8px 0 0; display: flex; flex-direction: column; gap: 5px; box-shadow: 0 2px 6px rgba(0,0,0,.3); }
.sp { background: #535353; }
.sp-head { height: 53px; background: #404040; display: flex; align-items: center; justify-content: flex-end; padding-right: 12px; border-bottom: 2px solid #3a3a3a; flex: none; }
.grad { height: 511px; flex: none; border-radius: 6px 6px 0 0; }
.grad .fp-title { border-radius: 6px 6px 0 0; }
.g-body { padding: 13px 0 0 276px; }
.g-thumbbox { width: 54px; height: 47px; border: 2px solid #4c4c4c; display: flex; align-items: center; justify-content: center; }
.g-thumbbox i { width: 32px; height: 32px; border: 2px solid #c4c4c4; background: radial-gradient(ellipse at center, #d0d0d0 0, #9a9a9a 25%, #5a5a5a 60%, #222 100%); }
.g-thumbbox.two { width: 41px; height: 43px; margin-top: 11px; }
.g-thumbbox.two svg { width: 28px; height: 28px; }
.g-drop { width: 70px; height: 42px; margin-top: 10px; background: #585858; border-radius: 4px; display: flex; align-items: center; justify-content: flex-end; padding-right: 13px; color: #747474; }
.g-drop .chev { color: #747474; }
.g-thumbbox.two + .g-drop { margin-top: 11px; }
.g-bar { display: flex; align-items: center; margin: 40px 0 39px; height: 32px; }
.g-bar i { width: 145px; height: 32px; background: linear-gradient(90deg, #666, #000); border: 2px solid #3a3a3a; }
.g-trash { width: 18px; height: 26px; margin-left: 30px; color: #707070; }
.trans { height: 262px; flex: none; position: relative; }
.t-row { display: flex; justify-content: flex-end; align-items: center; gap: 10px; padding: 14px 13px 0 0; white-space: nowrap; }
.t-label { color: #c8c8c8; font-size: 21px; }
.t-input { width: 162px; height: 40px; border: 2px solid #4c4c4c; border-radius: 4px; background: #454545; display: flex; }
.t-input span { flex: 1; font-family: "Inter", "Noto Sans", sans-serif; font-size: 23px; color: #eee; padding: 5px 0 0 8px; line-height: 34px; }
.t-btn { width: 36px; border-left: 2px solid #4c4c4c; display: flex; align-items: center; justify-content: center; }
.chevr { width: 10px; height: 16px; color: #e0e0e0; }
.t-sep { height: 2px; background: #4c4c4c; margin: 12px 11px 0 0; }
.t-mask { width: 192px; height: 41px; margin: 10px 0 0 288px; background: #585858; border-radius: 4px; text-align: center; font-size: 21px; color: #7c7c7c; line-height: 38px; letter-spacing: 1px; }
.t-check { display: flex; align-items: center; gap: 11px; margin: 12px 0 0 290px; height: 24px; font-size: 21px; color: #7c7c7c; letter-spacing: .6px; }
.t-check + .t-check { margin-top: 16px; }
.t-check i { width: 24px; height: 24px; border: 2px solid #707070; border-radius: 3px; }
.appear { flex: 1; min-height: 0; display: flex; flex-direction: column; }
.a-list { flex: 1; margin: 15px 12px 0 12px; border: 2px solid #4c4c4c; border-radius: 4px; }
.a-row { height: 50px; display: flex; align-items: center; border-bottom: 2px solid #4c4c4c; position: relative; font-size: 21px; color: #c8c8c8; }
.a-row.top { height: 52px; }
.a-thumb { position: absolute; left: 3px; top: 8px; width: 39px; height: 38px; background: #eee; border: 2px solid #fff; outline: 2px solid #2e2e2e; }
.a-none { margin-left: 97px; font-weight: 700; color: #d0d0d0; }
.eye { width: 26px; height: 18px; margin-left: 9px; color: #c0c0c0; flex: none; }
.eye.off { color: #6e6e6e; }
.a-v { width: 2px; height: 46px; background: #3c3c3c; margin: 0 10px 0 13px; flex: none; }
.a-ch { width: 10px; height: 16px; color: #d0d0d0; flex: none; }
.a-lab { width: 83px; margin-left: 28px; flex: none; }
.a-lab.wide { width: auto; margin-left: 38px; }
.u { border-bottom: 2px dotted #c8c8c8; }
.u.gap { margin-right: 5px; letter-spacing: .3px; }
.a-sw { width: 36px; height: 36px; border: 2px solid #2e2e2e; background: #fff; display: flex; align-items: center; justify-content: center; flex: none; }
.a-sw i { width: 22px; height: 22px; }
.in-black { background: #04040c; box-shadow: 0 0 0 2px #fff, 0 0 0 3px #111; }
.in-none { background: #fff; box-shadow: 0 0 0 2px #fff, 0 0 0 3px #111; }
.a-val { margin-left: 29px; font-family: "Noto Sans", sans-serif; color: #c0c0c0; font-size: 22px; }
.a-foot { height: 41px; display: flex; align-items: center; padding-left: 24px; flex: none; }
.af { width: 22px; height: 27px; margin-right: 30px; }
.fx { font-family: "Liberation Serif", serif; font-style: italic; font-size: 30px; color: #c4c4c4; width: 32px; margin-right: 154px; line-height: 30px; }
.af.noic { width: 24px; height: 26px; margin-right: 32px; }
.af.plus { margin-right: 28px; }
.af.atrash { color: #707070; }
.a-grip { height: 16px; border-top: 3px solid #3f3f3f; flex: none; }
.a-grip i { width: 38px; height: 9px; margin: 1px auto 0; background: repeating-linear-gradient(90deg, #2f2f2f 0 2px, transparent 2px 4px); }

/* chat */
.chat { position: absolute; left: 1946px; top: 434px; width: 760px; height: 900px; border-radius: 24px; overflow: hidden; background: #535353; display: flex; flex-direction: column; box-shadow: 0 0 8px rgba(0,0,0,.35); }
.ch-top { height: 56px; flex: none; display: flex; align-items: center; justify-content: space-between; padding: 0 22px 0 17px; }
.ch-dots { display: flex; gap: 17px; }
.ch-dots i { width: 23px; height: 23px; border-radius: 50%; background: #8a8a8a; }
.ch-slider { width: 102px; height: 4px; background: #6c6c6c; position: relative; margin-left: auto; }
.ch-slider i { position: absolute; right: 0; top: -8px; width: 20px; height: 20px; border-radius: 50%; background: #fff; }
.ch-profile { height: 120px; flex: none; display: flex; padding: 20px 0 0 28px; }
.avatar { width: 80px; height: 80px; border-radius: 34px; background: #9dc9dc; flex: none; }
.avatar svg { width: 80px; height: 80px; }
.ch-who { margin-left: 24px; color: #fff; }
.ch-name { font-size: 27px; font-weight: 500; line-height: 40px; letter-spacing: -.5px; }
.ch-count { display: flex; align-items: center; gap: 4px; color: #8f8f8f; font-size: 25px; font-family: "Noto Sans", sans-serif; line-height: 28px; margin-top: 8px; }
.ch-count svg { width: 22px; height: 20px; }
.ch-actions { margin-left: auto; display: flex; align-items: center; gap: 31px; padding: 0 28px 0 0; height: 80px; }
.ch-actions svg { height: 34px; width: 34px; }
.ch-actions svg:nth-child(3) { width: 36px; }
.ch-actions svg:nth-child(4) { width: 30px; }
.ch-area { height: 484px; flex: none; display: flex; position: relative; }
.ch-msgs { width: 730px; height: 484px; display: flex; flex-direction: column; justify-content: flex-end; padding-bottom: 24px; overflow: hidden; }
.ch-strip { flex: 1; background: #f8f8f8; position: relative; padding: 441px 0 0 9px; }
.ch-strip i { width: 15px; height: 36px; border-radius: 8px; background: #bdbdbd; }
.msg { display: flex; align-items: flex-end; gap: 12px; margin-top: 12px; flex: none; }
.msg.left { padding-left: 116px; }
.msg.right { justify-content: flex-end; padding-right: 32px; }
.msg.wide { margin-top: 22px; }
.msg.wide + .msg.wide { margin-top: 22px; }
.msg.right:last-child { margin-top: 12px; }
.msg time { color: #b2b2b2; font-size: 20.500px; line-height: 26px; letter-spacing: -.6px; white-space: nowrap; }
.bubble { height: 66px; padding: 0 20px; border-radius: 6px; display: flex; align-items: center; font-size: 24px; font-weight: 500; letter-spacing: -1.500px; color: #000; white-space: nowrap; position: relative; box-shadow: 0 1px 2px rgba(0,0,0,.15); }
.white { background: #fff; }
.yellow { background: #fde24f; }
.tail::after { content: ""; position: absolute; left: 100%; top: 13px; width: 12px; height: 16px; background: #fde24f; clip-path: polygon(0 0, 100% 0, 100% 20%, 0 100%); }
.notice { position: absolute; left: 20px; top: 0; width: 690px; height: 80px; background: #fff; border-radius: 6px; display: flex; align-items: center; padding-left: 27px; color: #111; font-size: 23px; letter-spacing: -.8px; box-shadow: 0 1px 3px rgba(0,0,0,.2); }
.mega { width: 32px; height: 32px; flex: none; margin-right: 21px; }
.nchev { width: 24px; height: 14px; margin-left: auto; margin-right: 28px; }
.ch-input { flex: 1; background: #fff; display: flex; align-items: flex-end; justify-content: space-between; padding: 0 16px 16px 27px; border-top: 2px solid #f0f0f0; }
.ci-tools { display: flex; gap: 28px; height: 60px; align-items: center; }
.ci-tools svg { width: 36px; height: 36px; }
.ci { fill: none; stroke: #6f6f6f; stroke-width: 2.200; }
.cf { fill: #6f6f6f; }
.ca { fill: none; stroke: #cacaca; stroke-width: 2; }
.ci-ai text { font: 700 16px "Liberation Sans", sans-serif; fill: #cacaca; }
.send { width: 120px; height: 60px; border-radius: 14px; background: #f2f2f2; color: #a8a8a8; font-size: 24px; font-weight: 500; text-align: center; line-height: 56px; }

/* dock */
.dock { position: absolute; left: 1069px; top: 1784px; width: 934px; height: 125px; border-radius: 36px; background: #555f6f; border: 2px solid #6b7585; display: flex; padding: 16px 0 0 17px; align-items: flex-start; }
.d-item { width: 76px; margin-right: 28px; position: relative; height: 107px; flex: none; }
.d-ic { width: 76px; height: 78px; margin-top: 1px; }
.dot { position: absolute; left: 36px; bottom: 0; width: 5px; height: 8px; border-radius: 50%; background: #000; top: 95px; }
.d-div { width: 2px; height: 94px; background: #20262e; margin: 0 35px 0 10px; flex: none; }
.keynote { margin-left: 0; }
.keynote .d-ic { height: 86px; margin-top: -1px; }
.keynote + .d-div { margin-left: 10px; }
.d-trash { width: 72px; margin-right: 0; }
.d-trash .d-ic { width: 72px; height: 90px; margin-top: -6px; }
.talk { font: 700 19px "Liberation Sans", sans-serif; fill: #f7e04a; letter-spacing: -.5px; }
.notion { font: 700 46px "Liberation Serif", serif; fill: #000; }
.aitext { font: 700 44px "Liberation Sans", sans-serif; fill: #ff9a00; letter-spacing: -1px; }
```
